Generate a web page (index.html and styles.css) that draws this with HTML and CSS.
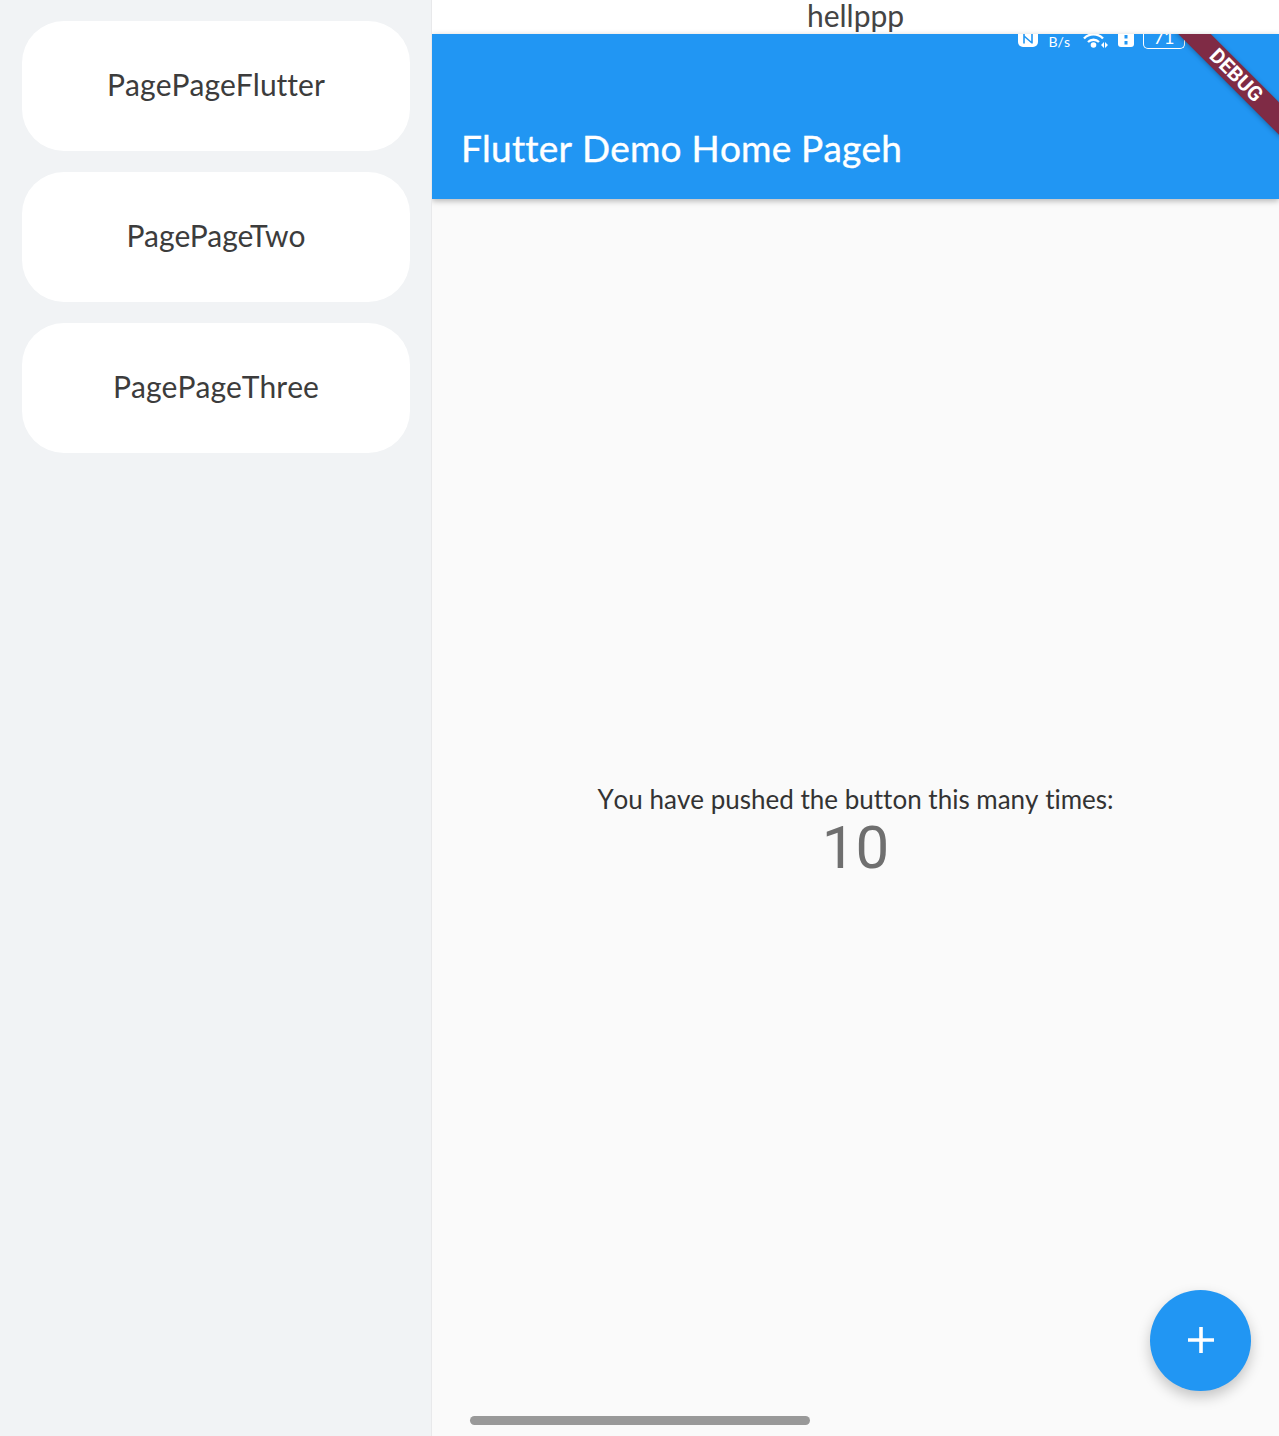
FILE: index.html
```html
<!DOCTYPE html>
<html>
  <head>
    <title>Flutter Demo Home Pageh</title>
    <meta charset="UTF-8"/>
    <link rel="stylesheet" href="styles.css">
  </head>
  <body>
    <div class="app">
      <nav class="sidebar">
        <a class="nav-card">PagePageFlutter</a>
        <a class="nav-card nav-card-kerned">PagePageTwo</a>
        <a class="nav-card">PagePageThree</a>
      </nav>
      <main class="main">
        <div class="top-title">hellppp</div>
        <header class="appbar">
          <div class="status-icons">
            <svg class="icon-nfc" width="22" height="14" viewBox="0 0 22 14">
              <path d="M1 0h20v8a5 5 0 0 1-5 5H6a5 5 0 0 1-5-5z" fill="#fff"/>
              <path d="M7 0v9.500M7 2l8 7M15 0v9.500" stroke="#2196f3" stroke-width="1.600" fill="none"/>
            </svg>
            <span class="speed">B/s</span>
            <svg class="icon-wifi" width="26" height="14" viewBox="0 0 26 14">
              <path d="M1 4.500a13 13 0 0 1 19 0M5 8a8 8 0 0 1 11 0" stroke="#fff" stroke-width="2.400" fill="none"/>
              <circle cx="10.500" cy="11" r="2.800" fill="#fff"/>
              <path d="M21 8v6l-3-3zM22 8v6l3-3z" fill="#fff"/>
            </svg>
            <svg class="icon-sim" width="16" height="14" viewBox="0 0 16 14">
              <path d="M0 0h16v10a3 3 0 0 1-3 3H3a3 3 0 0 1-3-3z" fill="#fff"/>
              <rect x="6.500" y="1" width="3" height="3.500" fill="#2196f3"/>
              <rect x="6.500" y="7" width="3" height="3.500" fill="#2196f3"/>
            </svg>
            <div class="battery"><span>71</span></div>
            <svg class="icon-bolt" width="18" height="15" viewBox="0 0 18 15">
              <path d="M0 0h3v5H0zM9 0h8l-4 5h3l-7 10 1-7H6z" fill="#fff"/>
            </svg>
          </div>
          <h1 class="appbar-title">Flutter Demo Home Pageh</h1>
        </header>
        <section class="counter">
          <p class="counter-label">You have pushed the button this many times:</p>
          <p class="counter-value">10</p>
        </section>
        <div class="scroll-handle"></div>
        <button class="fab">
          <svg width="26" height="26" viewBox="0 0 26 26">
            <path d="M13 0v26M0 13h26" stroke="#fff" stroke-width="3.600" fill="none"/>
          </svg>
        </button>
        <div class="debug-corner"><span class="debug-banner">DEBUG</span></div>
      </main>
    </div>
  </body>
</html>
```
FILE: styles.css
```css
* {
  box-sizing: border-box;
}

html, body {
  height: 100%;
}

body {
  margin: 0;
  font-family: 'Lato', 'Noto Sans', sans-serif;
  font-kerning: none;
  font-variant-ligatures: none;
  color: #333;
  background-color: #fafafa;
  overflow: hidden;
}

.app {
  display: flex;
  height: 1436px;
}

.sidebar {
  display: flex;
  flex-direction: column;
  gap: 21px;
  width: 432px;
  flex: none;
  padding: 21px 21px 0 22px;
  background-color: #f1f3f5;
  border-right: 1px solid #e8e9eb;
}

.nav-card {
  display: flex;
  align-items: center;
  justify-content: center;
  height: 130px;
  padding-bottom: 4px;
  border-radius: 42px;
  background-color: #fff;
  font-size: 30px;
  color: #3c3c3c;
}

.nav-card-kerned {
  font-kerning: normal;
}

.main {
  position: relative;
  display: flex;
  flex-direction: column;
  flex: 1;
  min-width: 0;
  overflow: hidden;
}

.top-title {
  height: 34px;
  background-color: #fff;
  text-align: center;
  font-size: 30px;
  line-height: 30px;
  color: #444;
}

.appbar {
  position: relative;
  height: 165px;
  padding: 91px 0 0 29px;
  background-color: #2196f3;
  box-shadow: 0 2px 6px rgba(0, 0, 0, 0.28);
  z-index: 1;
}

.appbar-title {
  margin: 0;
  font-size: 37px;
  line-height: 46px;
  font-weight: 400;
  letter-spacing: 0.2px;
  -webkit-text-stroke: 0.4px #fff;
  color: #fff;
}

.status-icons {
  position: absolute;
  top: 0;
  right: 73px;
  display: flex;
  align-items: flex-start;
  gap: 9px;
  height: 15px;
  overflow: hidden;
}

.speed {
  margin: 0 4px 0 1px;
  font-size: 14px;
  line-height: 15px;
  color: #fff;
}

.battery {
  width: 42px;
  height: 15px;
  border: 1.500px solid #fff;
  border-top: none;
  border-radius: 0 0 5px 5px;
  text-align: center;
  font-size: 18px;
  line-height: 6px;
  color: #fff;
}

.icon-bolt {
  margin-left: -6px;
}

.counter {
  display: flex;
  flex-direction: column;
  align-items: center;
  flex: 1;
  padding-top: 582px;
}

.counter-label {
  margin: 0;
  font-size: 26px;
  line-height: 36px;
  color: #333;
}

.counter-value {
  margin: 0;
  font-family: 'Roboto', sans-serif;
  font-size: 60px;
  line-height: 62px;
  color: #6f6f6f;
}

.scroll-handle {
  position: absolute;
  left: 38px;
  top: 1416px;
  width: 340px;
  height: 9px;
  border-radius: 5px;
  background-color: #999;
}

.fab {
  position: absolute;
  left: 718px;
  top: 1290px;
  display: flex;
  align-items: center;
  justify-content: center;
  width: 101px;
  height: 101px;
  padding: 0 0 1px;
  border: none;
  border-radius: 50%;
  background-color: #2196f3;
  box-shadow: 0 6px 14px rgba(0, 0, 0, 0.22);
}

.debug-corner {
  position: absolute;
  top: 34px;
  right: 0;
  width: 110px;
  height: 110px;
  overflow: hidden;
  z-index: 2;
}

.debug-banner {
  position: absolute;
  top: 30px;
  left: -8px;
  width: 150px;
  height: 23px;
  background-color: #7f2b45;
  box-shadow: 0 1px 5px rgba(0, 0, 0, 0.3);
  transform: rotate(45deg);
  text-align: center;
  font-family: 'Roboto', sans-serif;
  font-size: 20.500px;
  font-weight: 700;
  line-height: 23px;
  color: #fff;
}
```
